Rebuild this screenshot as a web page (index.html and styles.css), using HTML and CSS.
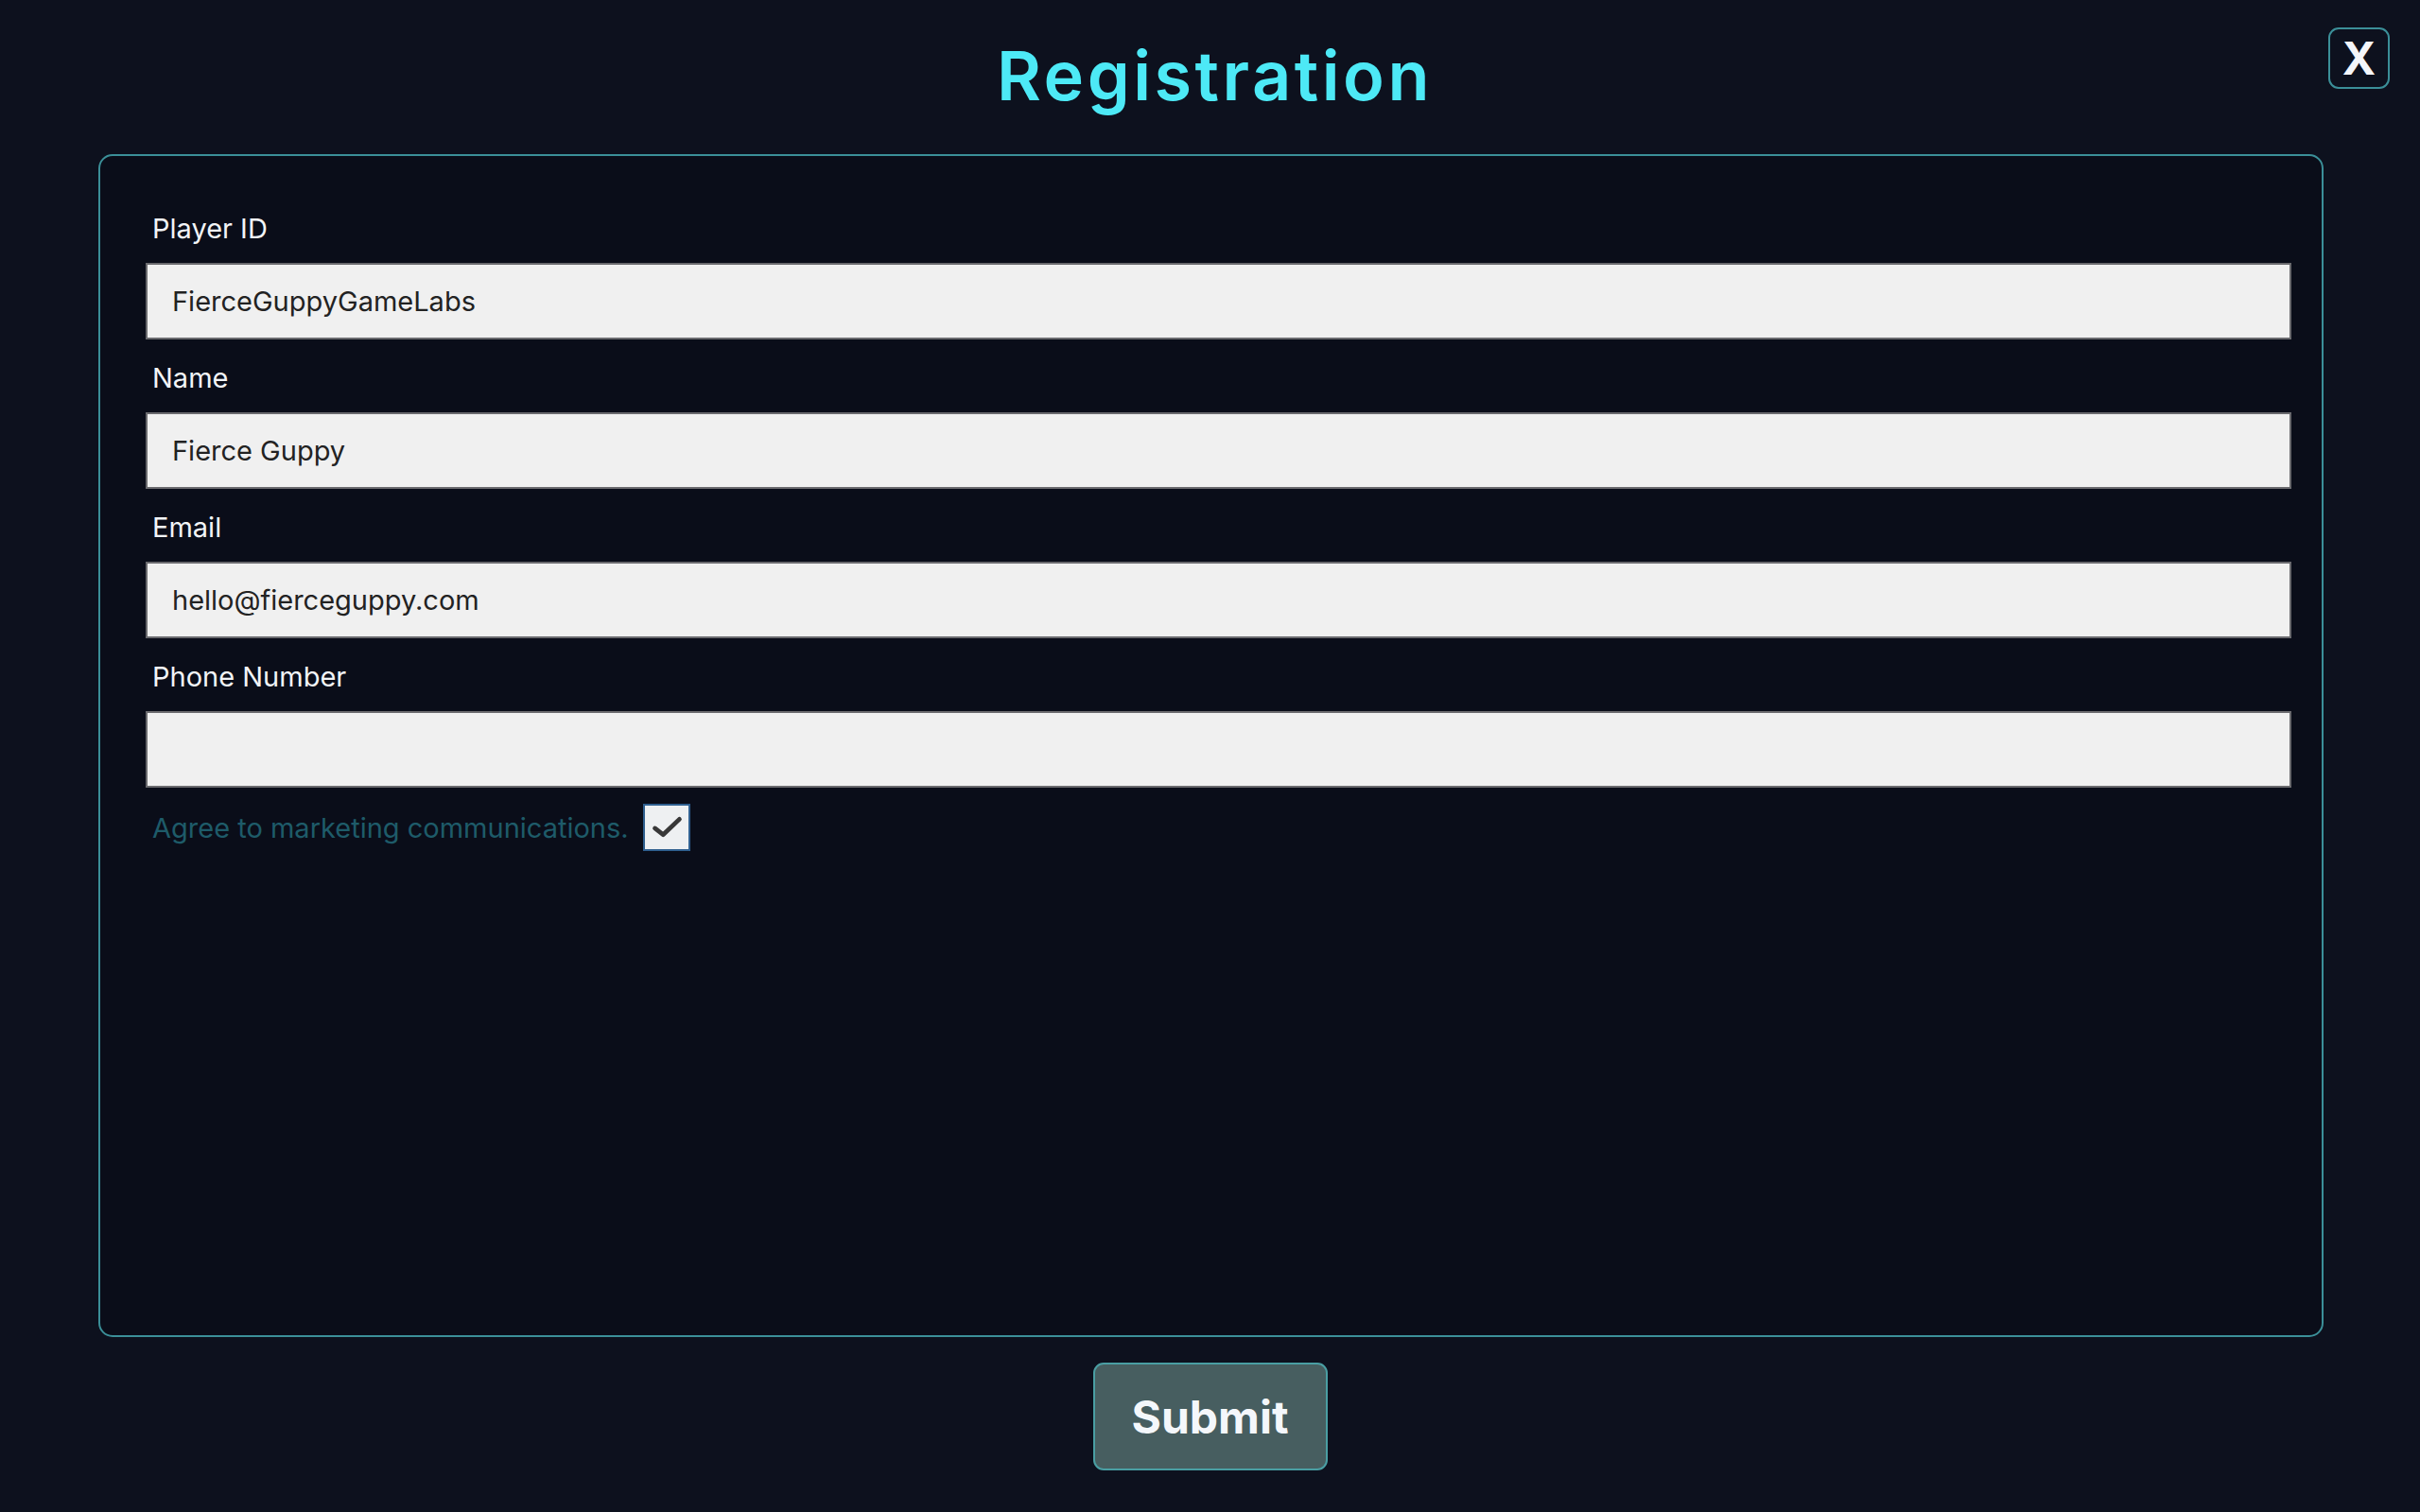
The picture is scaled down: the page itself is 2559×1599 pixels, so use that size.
FILE: index.html
```html
<!DOCTYPE html>
<html lang="en">
<head>
  <meta charset="UTF-8" />
  <meta name="viewport" content="width=device-width, initial-scale=1.0" />
  <title>Registration</title>
  <link rel="stylesheet" href="styles.css">
</head>
<body>
  <header class="top">
    <h1 class="title">Registration</h1>
    <button class="close-btn" type="button" onclick="closeForm()">X</button>
  </header>

  <form id="regForm" class="panel">
    <label for="playerId">Player ID</label>
    <input type="text" id="playerId" value="FierceGuppyGameLabs" />

    <label for="name">Name</label>
    <input type="text" id="name" value="Fierce Guppy" />

    <label for="email">Email</label>
    <input type="text" id="email" value="hello@fierceguppy.com" />

    <label for="phone">Phone Number</label>
    <input type="text" id="phone" value="" />

    <div class="agree">
      <span>Agree to marketing communications.</span>
      <button type="button" class="check" id="marketing" onclick="toggleCheck()">
        <svg viewBox="0 0 48 48" width="46" height="46">
          <path d="M11 25 L20 32 L38 15" fill="none" stroke="#383838" stroke-width="5" stroke-linecap="round" stroke-linejoin="round"/>
        </svg>
      </button>
    </div>
  </form>

  <div class="actions">
    <button type="button" class="submit-btn" onclick="submitForm()">Submit</button>
  </div>

  <script>
    let agreed = true;

    function toggleCheck() {
      agreed = !agreed;
      document.querySelector("#marketing svg").style.visibility = agreed ? "visible" : "hidden";
    }

    function submitForm() {
      const data = {
        playerId: document.getElementById("playerId").value,
        name: document.getElementById("name").value,
        email: document.getElementById("email").value,
        phone: document.getElementById("phone").value,
        marketing: agreed
      };
      console.log("submit", data);
    }

    function closeForm() {
      console.log("closed");
    }
  </script>
</body>
</html>
```

FILE: styles.css
```css
:root {
  --bg-color: #0d111e;
  --panel-bg: #0a0d19;
  --teal: #3b8f98;
  --cyan: #4de9f6;
}
body {
  font-family: Inter, "Noto Sans", sans-serif;
  background-color: var(--bg-color);
  color: #f2f4f7;
  margin: 0;
  padding: 0;
}
.top {
  position: relative;
  text-align: center;
}
.title {
  margin: 0;
  padding: 36px 0 40px 10px;
  font-size: 72px;
  line-height: 87px;
  font-weight: 600;
  letter-spacing: 3.5px;
  color: var(--cyan);
}
.close-btn {
  position: absolute;
  top: 29px;
  right: 32px;
  width: 65px;
  height: 65px;
  background: transparent;
  border: 2px solid var(--teal);
  border-radius: 11px;
  color: #f4f6fa;
  font-family: Inter, sans-serif;
  font-size: 48px;
  font-weight: 700;
  line-height: 1;
  padding: 0;
  cursor: pointer;
}
.panel {
  box-sizing: border-box;
  height: 1251px;
  margin: 0 102px 0 104px;
  padding: 59px 32px 0 48px;
  background: var(--panel-bg);
  border: 2px solid var(--teal);
  border-radius: 15px;
  display: flex;
  flex-direction: column;
}
label {
  display: block;
  padding-left: 7px;
  font-size: 29px;
  line-height: 35px;
  color: #f2f4f7;
  margin-bottom: 19px;
}
input[type="text"] {
  box-sizing: border-box;
  width: 100%;
  height: 81px;
  margin: 0 0 23px;
  padding: 0 26px;
  background: #f0f0f0;
  border: 2px solid #6a6a6e;
  border-radius: 0;
  font-family: Inter, sans-serif;
  font-size: 29px;
  color: #222;
  outline: none;
}
.agree {
  display: flex;
  align-items: center;
  gap: 15px;
  margin-top: -6px;
  padding-left: 7px;
  font-size: 29px;
  color: #1e5b69;
}
.check {
  width: 50px;
  height: 50px;
  padding: 0;
  background: #eef0f2;
  border: 2px solid #2f5f8f;
  display: flex;
  align-items: center;
  justify-content: center;
  cursor: pointer;
}
.actions {
  display: flex;
  justify-content: center;
  padding-top: 27px;
}
.submit-btn {
  width: 248px;
  height: 114px;
  background: #475e60;
  border: 2px solid #4a9ea3;
  border-radius: 11px;
  color: #f4f7fb;
  font-family: Inter, sans-serif;
  font-size: 48px;
  font-weight: 700;
  cursor: pointer;
}
```
